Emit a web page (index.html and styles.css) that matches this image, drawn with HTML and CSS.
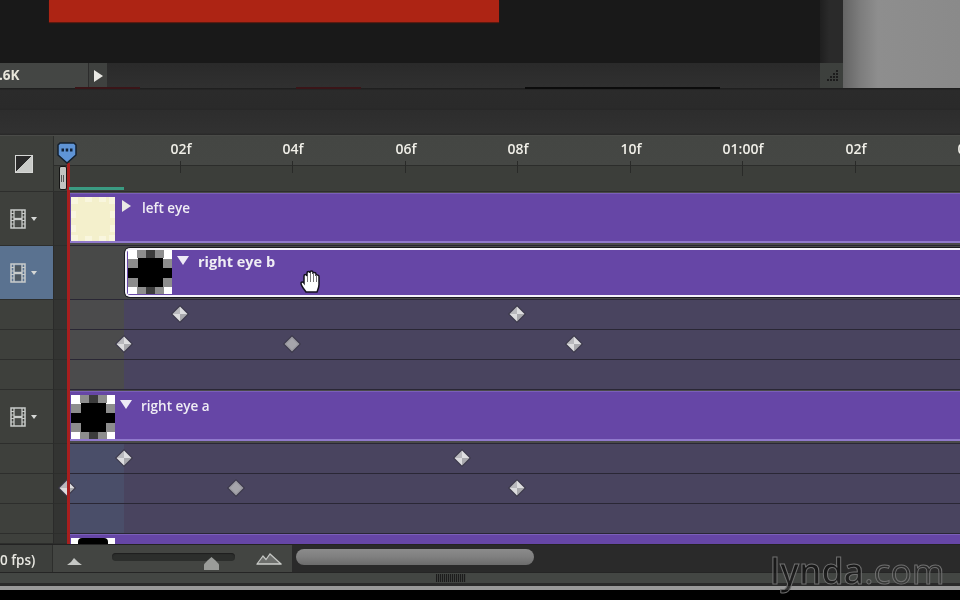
FILE: index.html
```html
<!DOCTYPE html>
<html lang="en">
<head>
<meta charset="utf-8">
<title>Timeline</title>
<link rel="stylesheet" href="styles.css">
</head>
<body>
<svg class="defs" width="0" height="0" aria-hidden="true">
  <defs>
    <symbol id="film" viewBox="0 0 16 20">
      <path d="M1 1h14v18H1z" fill="none" stroke="#c9ccca" stroke-width="1.5"/>
      <path d="M4 1v18M12 1v18M4 9.5h8M4 10.5h8" fill="none" stroke="#c9ccca" stroke-width="1.3"/>
      <path d="M1 4.500h3M1 8h3M1 11.500h3M1 15h3M12 4.500h3M12 8h3M12 11.500h3M12 15h3" stroke="#c9ccca" stroke-width="1"/>
      <path d="M5 2.500h6v6H5zM5 11.500h6v6H5z" fill="#4c4e4b" opacity=".7"/>
    </symbol>
    <symbol id="key" viewBox="0 0 18 18">
      <polygon points="9,0 18,9 9,18 0,9" fill="#3a3748"/>
      <polygon points="9,1.500 9,9 1.500,9" fill="#b9b9bd"/>
      <polygon points="9,1.500 16.500,9 9,9" fill="#dedee0"/>
      <polygon points="1.500,9 9,9 9,16.500" fill="#dcdcde"/>
      <polygon points="16.500,9 9,9 9,16.500" fill="#a9a9ad"/>
    </symbol>
    <symbol id="key-dim" viewBox="0 0 18 18">
      <polygon points="9,0 18,9 9,18 0,9" fill="#3a3748"/>
      <polygon points="9,1.500 16.500,9 9,16.500 1.500,9" fill="#9b9aa1"/>
      <polygon points="9,3.500 14.500,9 9,14.500 3.500,9" fill="#a6a5ab"/>
    </symbol>
    <symbol id="eye" viewBox="0 0 44 44" shape-rendering="crispEdges">
      <rect width="44" height="44" fill="#fff"/>
      <path d="M9 0h9v8H9zM27 0h9v8h-9zM0 9h10v9H0zM34 9h10v9H34zM0 28h10v9H0zM34 28h10v9H34zM9 36h9v8H9zM27 36h9v8h-9z" fill="#8d8d8d"/>
      <path d="M18 0h9v8h-9zM18 36h9v8h-9z" fill="#3c3c3c"/>
      <path d="M10 8h25v10h9v10h-9v9H10v-9H0V18h10z" fill="#000"/>
    </symbol>
    <symbol id="eye-top" viewBox="0 0 44 44">
      <rect width="44" height="44" fill="#fff"/>
      <path d="M7 6V4q0-4 4-4h22q4 0 4 4v40H7z" fill="#000"/>
    </symbol>
    <symbol id="blank" viewBox="0 0 44 44" shape-rendering="crispEdges">
      <rect width="44" height="44" fill="#f4f0cc"/>
      <path d="M0 0h7v7H0zM14 0h7v5h-7zM28 0h7v5h-7zM0 14h5v7H0zM0 28h5v7H0zM39 14h5v7h-5zM39 28h5v7h-5zM0 38h7v6H0zM14 39h7v5h-7zM28 39h7v5h-7zM38 0h6v7h-6zM38 38h6v6h-6z" fill="#f9f6de"/>
    </symbol>
  </defs>
</svg>

<div class="app">
  <section class="viewer">
    <div class="canvas">
      <div class="stage">
        <div class="stage-main"><div class="art"></div></div>
        <div class="vscroll"></div>
      </div>
      <div class="status">
        <div class="size">.6K</div>
        <div class="next"><span class="tri-right"></span></div>
        <div class="status-fill"></div>
        <div class="resize">
          <svg width="15" height="15" viewBox="0 0 15 15"><path d="M12 2h2v2h-2zM9 5h2v2H9zM12 5h2v2h-2zM6 8h2v2H6zM9 8h2v2H9zM12 8h2v2h-2zM3 11h2v2H3zM6 11h2v2H6zM9 11h2v2H9zM12 11h2v2h-2z" fill="#1c1c1c"/></svg>
        </div>
      </div>
    </div>
    <div class="side"></div>
  </section>

  <div class="bar bar-a"></div>
  <div class="bar bar-b"></div>

  <section class="timeline">
    <div class="ruler">
      <div class="ruler-head"><span class="comp-icon"></span></div>
      <div class="ruler-scale">
        <div class="tick" style="left:126px"><span>02f</span></div>
        <div class="tick" style="left:238px"><span>04f</span></div>
        <div class="tick" style="left:351px"><span>06f</span></div>
        <div class="tick" style="left:463px"><span>08f</span></div>
        <div class="tick" style="left:576px"><span>10f</span></div>
        <div class="tick tick-major" style="left:688px"><span>01:00f</span></div>
        <div class="tick" style="left:801px"><span>02f</span></div>
        <div class="tick" style="left:913px"><span>04f</span></div>
      </div>
    </div>

    <div class="row row-layer">
      <div class="head"><svg class="film"><use href="#film"/></svg><span class="tri-menu"></span></div>
      <div class="gutter"></div>
      <div class="track track-plain">
        <div class="clip">
          <svg class="thumb"><use href="#blank"/></svg>
          <span class="tri-right small"></span>
          <span class="clip-name">left eye</span>
        </div>
      </div>
    </div>

    <div class="row row-layer">
      <div class="head head-on"><svg class="film"><use href="#film"/></svg><span class="tri-menu"></span></div>
      <div class="gutter"></div>
      <div class="track track-grey">
        <div class="clip clip-on">
          <svg class="thumb"><use href="#eye"/></svg>
          <span class="tri-down"></span>
          <span class="clip-name">right eye b</span>
        </div>
      </div>
    </div>

    <div class="row row-sub">
      <div class="head"></div><div class="gutter"></div>
      <div class="track track-sub">
        <svg class="kf" style="left:103px"><use href="#key"/></svg>
        <svg class="kf" style="left:440px"><use href="#key"/></svg>
      </div>
    </div>
    <div class="row row-sub">
      <div class="head"></div><div class="gutter"></div>
      <div class="track track-sub">
        <svg class="kf" style="left:47px"><use href="#key"/></svg>
        <svg class="kf" style="left:215px"><use href="#key-dim"/></svg>
        <svg class="kf" style="left:497px"><use href="#key"/></svg>
      </div>
    </div>
    <div class="row row-sub">
      <div class="head"></div><div class="gutter"></div>
      <div class="track track-sub"></div>
    </div>

    <div class="row row-layer">
      <div class="head"><svg class="film"><use href="#film"/></svg><span class="tri-menu"></span></div>
      <div class="gutter"></div>
      <div class="track track-plain">
        <div class="clip">
          <svg class="thumb"><use href="#eye"/></svg>
          <span class="tri-down"></span>
          <span class="clip-name">right eye a</span>
        </div>
      </div>
    </div>

    <div class="row row-sub">
      <div class="head"></div><div class="gutter"></div>
      <div class="track track-blue">
        <svg class="kf" style="left:47px"><use href="#key"/></svg>
        <svg class="kf" style="left:385px"><use href="#key"/></svg>
      </div>
    </div>
    <div class="row row-sub">
      <div class="head"></div><div class="gutter"></div>
      <div class="track track-blue">
        <svg class="kf" style="left:-10px"><use href="#key"/></svg>
        <svg class="kf" style="left:159px"><use href="#key-dim"/></svg>
        <svg class="kf" style="left:440px"><use href="#key"/></svg>
      </div>
    </div>
    <div class="row row-sub">
      <div class="head"></div><div class="gutter"></div>
      <div class="track track-blue"></div>
    </div>

    <div class="row row-cut">
      <div class="head"></div><div class="gutter"></div>
      <div class="track track-plain">
        <div class="clip clip-cut"><svg class="thumb"><use href="#eye-top"/></svg></div>
      </div>
    </div>

    <div class="footer">
      <div class="fps">0 fps)</div>
      <div class="zoom">
        <svg class="mount-s" width="15" height="9" viewBox="0 0 15 9"><path d="M0 8l4-3 3-4 4 4 4 3z" fill="#c5c7c4"/></svg>
        <div class="slider"><span class="knob"></span></div>
        <svg class="mount-l" width="26" height="12" viewBox="0 0 26 12"><path d="M1 11L7 3l3 3.500L14 1l11 10z" fill="#6d6f6c" stroke="#c5c7c4" stroke-width="1.200"/><path d="M1 10.500h24v1H1z" fill="#d0d2cf"/></svg>
      </div>
      <div class="scroll"><div class="scroll-thumb"></div></div>
    </div>

    <div class="playhead"></div>
    <div class="range"></div>
    <div class="work-handle"></div>
    <svg class="marker" width="20" height="22" viewBox="0 0 20 22">
      <path d="M3 1h14l2 2v10l-9 8-9-8V3z" fill="#5f94d6" stroke="#14202e" stroke-width="1.500"/>
      <path d="M4.500 6.500h2.500v3H4.500zM8.700 6.500h2.500v3H8.700zM13 6.500h2.500v3H13z" fill="#12233a"/>
    </svg>
    <svg class="hand" width="24" height="25" viewBox="0 0 24 25">
      <path d="M7 23c-2-3-5-6-5-9 0-1.500 2-1.500 3 0V7c0-2 2.500-2 3 0V4c0-2 3-2 3 0v-.5c0-2 3-2 3 0V5c0-2 3-2 3 0v2c0-1.500 3-1.500 3 .5v8c0 3-1 5-2 7.500z" fill="#fff" stroke="#15121f" stroke-width="1.500"/>
      <path d="M8.500 7v6M11.500 4v9M14.500 4v9M17.500 6v7" stroke="#777" stroke-width="1"/>
    </svg>
  </section>

  <div class="strip"><span class="strip-grip"></span></div>
  <div class="edge"></div>

  <span class="bleed bleed-a"></span>
  <span class="bleed bleed-b"></span>
  <span class="bleed bleed-c"></span>
  <div class="logo"><span class="logo-a">lynda</span><span class="logo-b">.com</span></div>
</div>
</body>
</html>
```
FILE: styles.css
```css
html, body { margin: 0; padding: 0; background: #000; }
.defs { position: absolute; }
.app {
  position: relative;
  display: flex;
  flex-direction: column;
  width: 960px;
  height: 600px;
  overflow: hidden;
  background: #000;
  font-family: "Open Sans", sans-serif;
  filter: blur(0.45px);
}

/* viewer */
.viewer { display: flex; height: 88px; flex: none; }
.canvas { display: flex; flex-direction: column; width: 843px; flex: none; }
.stage { display: flex; height: 63px; flex: none; }
.stage-main { flex: 1; background: #191919; padding-left: 49px; }
.art { width: 450px; height: 22px; background: #ad2414; box-shadow: 0 1px 1px #5a1a10; }
.vscroll { width: 23px; background: linear-gradient(90deg, #1f1f1f, #2a2a2a 40%, #2a2a2a); }
.status { display: flex; flex: 1; background: linear-gradient(#2a2a2a, #303030); }
.size {
  width: 88px;
  box-sizing: border-box;
  background: #444644;
  color: #e8e6da;
  font-size: 13.500px;
  font-weight: 700;
  line-height: 25px;
  text-indent: -1px;
  overflow: hidden;
}
.next {
  display: flex;
  align-items: center;
  justify-content: center;
  width: 19px;
  background: #3f413f;
  border-left: 1px solid #2c2c2c;
  box-sizing: border-box;
}
.status-fill { flex: 1; }
.resize {
  display: flex;
  align-items: center;
  justify-content: center;
  width: 23px;
  background: #3d403d;
}
.side { flex: 1; background: linear-gradient(90deg, #646464, #7d7d7d 15%, #8e8e8e 30%, #8a8a8a); }

.tri-right {
  width: 0;
  height: 0;
  border-left: 9px solid #e9e9e4;
  border-top: 6px solid transparent;
  border-bottom: 6px solid transparent;
}
.tri-right.small { margin: 3px 1px 0 1px; }
.tri-down {
  width: 0;
  height: 0;
  margin: 5px -1px 0 -1px;
  border-top: 9px solid #eeeaf6;
  border-left: 6px solid transparent;
  border-right: 6px solid transparent;
}
.tri-menu {
  width: 0;
  height: 0;
  margin-left: 5px;
  border-top: 4px solid #d6d8d6;
  border-left: 3.500px solid transparent;
  border-right: 3.500px solid transparent;
}

.bar { flex: none; }
.bar-a { height: 22px; background: linear-gradient(#1d1d1d, #2b2b2b 12%, #2a2a2a 90%, #272727); }
.bar-b { height: 25px; background: linear-gradient(#2d2d2d, #313131 90%, #282828); }

/* timeline */
.timeline { position: relative; flex: none; }
.ruler { display: flex; height: 57px; background: #3e403c; border-top: 1px solid #4a4b48; box-sizing: border-box; }
.ruler-head {
  display: flex;
  align-items: center;
  justify-content: center;
  width: 54px;
  box-sizing: border-box;
  border-right: 1px solid #2d2e2c;
  border-bottom: 1px solid #2d2e2c;
  padding-right: 5px;
}
.comp-icon {
  width: 18px;
  height: 18px;
  background: linear-gradient(135deg, #2a2a2a 50%, #c9cbc8 50%);
  border: 1px solid #d6d7d5;
  box-sizing: border-box;
}
.ruler-scale {
  position: relative;
  flex: 1;
  background: linear-gradient(#444643 0, #454744 29px, #2c2d2b 29px, #2c2d2b 30px, #3c3e3a 30px);
  border-bottom: 1px solid #2d2e2c;
  overflow: hidden;
}
.tick { position: absolute; top: 25px; width: 1px; height: 12px; background: #292a28; }
.tick-major { height: 15px; }
.tick span {
  position: absolute;
  top: -19px;
  left: 1px;
  transform: translateX(-50%);
  color: #f0efe8;
  font-size: 14px;
  font-weight: 600;
  line-height: 14px;
  white-space: nowrap;
}

.row { display: flex; }
.row-layer { height: 54px; }
.row-sub { height: 30px; }
.row-cut { height: 10px; overflow: hidden; }
.head {
  display: flex;
  align-items: center;
  width: 54px;
  flex: none;
  box-sizing: border-box;
  padding-left: 10px;
  background: #3e403c;
  border-bottom: 1px solid #2d2e2c;
  border-right: 1px solid #2b2b2a;
}
.head-on { background: #5a7290; }
.film { width: 16px; height: 20px; }
.gutter { width: 14px; flex: none; background: #333432; border-bottom: 1px solid #2d2e2c; }
.track { position: relative; flex: 1; box-sizing: border-box; border-bottom: 1px solid #2a2735; }
.track-plain { background: #4a4a4a; }
.track-grey { background: #484948; }
.track-sub { background: linear-gradient(90deg, #4b4b4c 56px, #49445f 56px); }
.track-blue { background: linear-gradient(90deg, #4a4e69 56px, #49445f 56px); }

.clip {
  position: absolute;
  inset: 1px 0 2px 1px;
  display: flex;
  gap: 6px;
  align-items: flex-start;
  padding: 3px 0 0 2px;
  box-sizing: border-box;
  background: #6646a6;
  border-top: 1px solid #7a5fb8;
  border-bottom: 2px solid #9079cc;
}
.clip-on {
  left: 57px;
  top: 2px;
  bottom: 2px;
  padding: 0 0 0 1px;
  border: 2px solid #f4f2fa;
  border-right: none;
  border-radius: 5px 0 0 5px;
  box-shadow: 0 0 0 1px #1a1a1f;
}
.clip-cut { top: 0; bottom: -40px; }
.thumb { width: 44px; height: 44px; flex: none; }
.clip-name {
  margin: 4px 0 0 4px;
  color: #efedf4;
  font-size: 13.500px;
  font-weight: 600;
  line-height: 14px;
}
.clip-on .clip-name { margin-top: 5px; font-size: 14.500px; font-weight: 700; }
.clip-on .tri-down { margin-top: 6px; }

.kf { position: absolute; top: 50%; width: 18px; height: 18px; margin-top: -10px; }

/* footer */
.footer { display: flex; height: 28px; background: #2a2a2a; border-top: 1px solid #232323; box-sizing: border-box; }
.fps {
  width: 53px;
  box-sizing: border-box;
  background: #3d3f3c;
  border-right: 1px solid #2d2e2c;
  color: #e9e8e2;
  font-size: 13.500px;
  font-weight: 600;
  line-height: 30px;
  white-space: nowrap;
}
.zoom {
  position: relative;
  display: flex;
  align-items: center;
  width: 239px;
  box-sizing: border-box;
  padding: 0 11px 0 14px;
  background: #434542;
}
.slider {
  position: relative;
  width: 123px;
  height: 8px;
  margin: -3px 21px 0 30px;
  flex: none;
  background: #2c2e2c;
  border-radius: 4px;
  box-shadow: inset 0 1px 1px #1e1e1e;
}
.knob {
  position: absolute;
  left: 92px;
  top: 4px;
  width: 15px;
  height: 13px;
  background: #9a9c99;
  clip-path: polygon(50% 0, 75% 25%, 100% 55%, 100% 100%, 0 100%, 0 55%, 25% 25%);
}
.scroll { flex: 1; padding: 4px 0 0 4px; }
.scroll-thumb {
  width: 238px;
  height: 16px;
  border-radius: 8px;
  background: linear-gradient(#8b8b8b, #7f7f7f 50%, #6c6c6c);
}
.mount-s { flex: none; margin-top: 6px; }
.mount-l { flex: none; margin-top: 1px; }

.strip {
  display: flex;
  flex: none;
  height: 14px;
  background: #434643;
  border-top: 1px solid #252525;
  border-bottom: 3px solid #2a2a2a;
  box-sizing: border-box;
  padding: 1px 0 0 436px;
}
.strip-grip {
  width: 30px;
  height: 8px;
  background: repeating-linear-gradient(90deg, #1c1c1c 0 1px, #3d3f3d 1px 2px);
}
.edge { flex: none; height: 4px; background: #999; }

/* overlays */
.playhead { position: absolute; left: 67px; top: 28px; width: 3px; height: 381px; background: #a81e1e; }
.range { position: absolute; left: 69px; top: 52px; width: 55px; height: 3px; background: #3a9b82; }
.work-handle {
  position: absolute;
  left: 59px;
  top: 31px;
  width: 8px;
  height: 24px;
  background: linear-gradient(90deg, #c2c3c1 1px, #555 1px 2px, #c2c3c1 2px 3px, #555 3px 4px, #c2c3c1 4px) center / 100% 7px no-repeat #c2c3c1;
  border: 1px solid #151515;
  border-radius: 2px;
  box-sizing: border-box;
}
.marker { position: absolute; left: 57px; top: 7px; }
.hand { position: absolute; left: 299px; top: 134px; }

.bleed { position: absolute; top: 87px; height: 2px; }
.bleed-a { left: 75px; width: 65px; background: #3a1518; }
.bleed-b { left: 296px; width: 65px; background: #3a1518; }
.bleed-c { left: 525px; width: 195px; background: #0c0c0c; }

.logo {
  position: absolute;
  left: 770px;
  top: 546px;
  font-size: 35.500px;
  line-height: 48px;
  white-space: nowrap;
}
.logo-a { color: rgba(20, 20, 20, 0.75); -webkit-text-stroke: 1px #707070; font-weight: 600; }
.logo-b { color: rgba(40, 40, 40, 0.35); -webkit-text-stroke: 1px #707070; }
```
